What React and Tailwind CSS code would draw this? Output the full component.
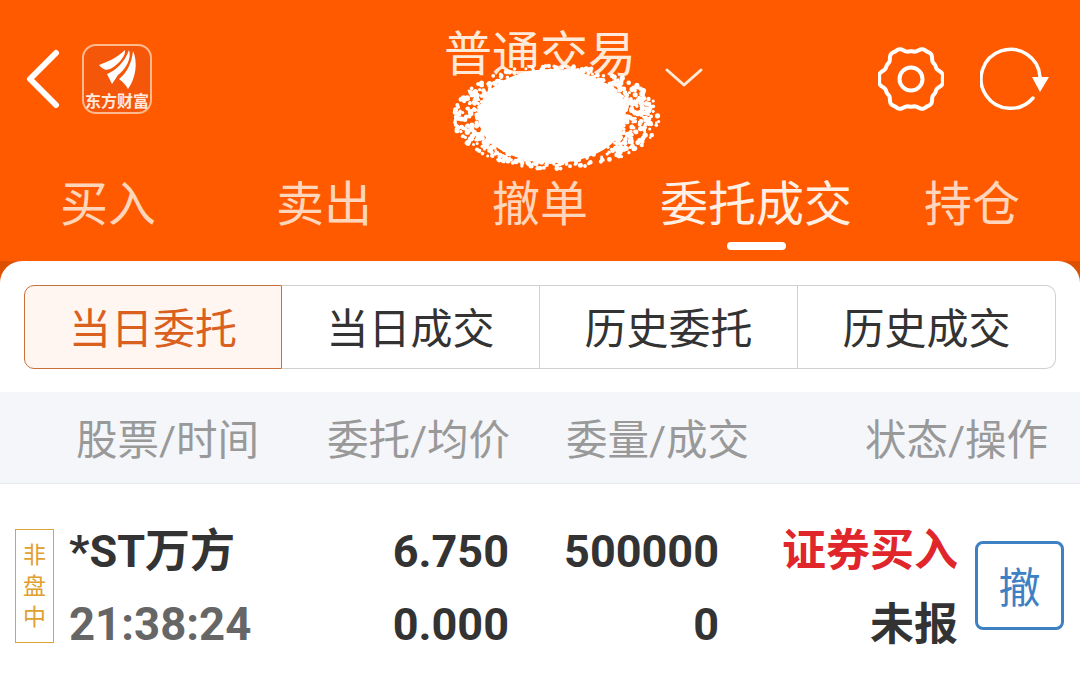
const tabs = ['买入', '卖出', '撤单', '委托成交', '持仓']
const segments = ['当日委托', '当日成交', '历史委托', '历史成交']

// gear outline, six squarish lobes
const gearPoints = Array.from({ length: 240 }, (_, i) => {
  const a = (i / 240) * Math.PI * 2
  const r = 29.8 + 2.6 * Math.cos(6 * a) - 0.6 * Math.cos(18 * a)
  return `${(33 + r * Math.cos(a)).toFixed(1)},${(33 + r * Math.sin(a)).toFixed(1)}`
}).join(' ')

// scribbled-out account name: seeded speckle around a solid blob
let seed = 17
const rand = () => {
  seed = (seed * 16807) % 2147483647
  return seed / 2147483647
}
const speckle = Array.from({ length: 900 }, () => {
  const a = rand() * Math.PI * 2
  const d = 0.62 + rand() * 0.38
  const stretch = Math.cos(a) > 0 ? 106 : 100
  return {
    x: 103 + stretch * d * Math.cos(a),
    y: 55 + 52 * d * Math.sin(a),
    r: 1.3 + rand() * 1.4,
  }
})

function Scribble() {
  return (
    <svg width="216" height="112" viewBox="0 0 216 112" className="absolute left-[450px] top-[62px]">
      <ellipse cx="102" cy="54" rx="74" ry="47" fill="#fff" />
      {speckle.map((d, i) => (
        <circle key={i} cx={d.x.toFixed(1)} cy={d.y.toFixed(1)} r={d.r.toFixed(1)} fill="#fff" />
      ))}
    </svg>
  )
}

function Logo() {
  return (
    <div className="relative flex h-[70px] w-[70px] flex-col items-center rounded-[14px] border-2 border-[#ffb98f] bg-[#f4570a]">
      <svg width="44" height="44" viewBox="0 0 44 44" className="mt-[1px]">
        <path d="M4 18 C12 15 22 11 30 3 C31 8 25 16 17 21 C12 24 8 23 4 18 Z" fill="#fff" />
        <path d="M12 27 C20 24 30 15 34 3 C37 11 31 22 23 28 L17 37 Z" fill="#fff" />
        <path d="M24 32 C32 26 37 15 38 4 C43 15 41 31 33 42 C31 38 28 35 24 32 Z" fill="#fff" />
      </svg>
      <span
        className="absolute bottom-[2px] text-[16px] leading-[20px] font-bold whitespace-nowrap text-[#ffe9dc]"
        style={{ fontFamily: '"Noto Sans CJK SC", sans-serif' }}
      >
        东方财富
      </span>
    </div>
  )
}

export default function App() {
  return (
    <div
      className="h-[680px] w-[1080px] overflow-hidden bg-white"
      style={{ fontFamily: 'Roboto, "Noto Sans CJK SC", sans-serif' }}
    >
      <div className="relative h-[261px] bg-[#ff5a00]">
        <div className="flex h-[174px] items-start">
          <svg width="36" height="60" viewBox="0 0 36 60" className="mt-[49px] ml-[25px]">
            <path d="M31 4 L5 30 L31 56" fill="none" stroke="#fff" strokeWidth="6" strokeLinecap="round" strokeLinejoin="round" />
          </svg>
          <div className="mt-[44px] ml-[21px]">
            <Logo />
          </div>
          <div className="mt-[24px] ml-[292px] text-[48px] leading-[62px] whitespace-nowrap text-[#ffe9d9]">普通交易</div>
          <svg width="38" height="20" viewBox="0 0 38 20" className="mt-[68px] ml-[29px]">
            <path d="M2 2 L19 17 L36 2" fill="none" stroke="#ffe9d9" strokeWidth="3" strokeLinecap="round" strokeLinejoin="round" />
          </svg>
          <svg width="66" height="66" viewBox="0 0 66 66" className="mt-[46px] ml-[175px]">
            <polygon points={gearPoints} fill="none" stroke="#fff" strokeWidth="4" strokeLinejoin="round" />
            <circle cx="33" cy="33" r="11.5" fill="none" stroke="#fff" strokeWidth="4" />
          </svg>
          <svg width="72" height="64" viewBox="0 0 72 64" className="mt-[47px] ml-[36px]">
            <path d="M60 30 A29.5 29.5 0 1 0 53 51" fill="none" stroke="#fff" strokeWidth="3.5" strokeLinecap="round" />
            <path d="M52 30 L69 30 L60 45 Z" fill="#fff" />
          </svg>
        </div>
        <div className="flex">
          {tabs.map((t) => (
            <div key={t} className="relative w-[216px] text-center text-[48px] leading-[62px] whitespace-nowrap text-[#ffd5bb]">
              <span className={t === '委托成交' ? 'text-[#fff0e6]' : ''}>{t}</span>
              {t === '委托成交' && (
                <div className="absolute top-[68px] left-[79px] h-[8px] w-[59px] rounded-full bg-white" />
              )}
            </div>
          ))}
        </div>
        <Scribble />
      </div>

      <div className="bg-[#dd5000]">
        <div className="h-[419px] rounded-t-[22px] bg-white pt-[24px]">
          <div className="mx-[24px] flex h-[84px]">
            {segments.map((s, i) =>
              i === 0 ? (
                <div key={s} className="flex w-[258px] items-center justify-center rounded-l-[10px] border border-[#c8703a] bg-[#fff6f2] pt-[4px] text-[42px] text-[#d9601e]">
                  {s}
                </div>
              ) : (
                <div
                  key={s}
                  className={`flex w-[258px] items-center justify-center border-y border-r border-[#d0d0d0] pt-[4px] text-[42px] text-[#333] ${i === 3 ? 'rounded-r-[10px]' : ''}`}
                >
                  {s}
                </div>
              )
            )}
          </div>

          <div className="mt-[23px] flex h-[92px] items-center border-b border-[#e6e8ec] bg-[#f4f6f9] pt-[8px] text-[41.5px] whitespace-nowrap text-[#999]">
            <div className="w-[266px] pl-[76px]">股票/时间</div>
            <div className="w-[244px] text-right">委托/均价</div>
            <div className="w-[239px] text-right">委量/成交</div>
            <div className="w-[299px] text-right">状态/操作</div>
          </div>

          <div className="flex pt-[45px] pl-[15px]">
            <div className="flex h-[114px] w-[39px] flex-col items-center justify-center gap-[5px] border border-[#dfa33c] pt-[2px] text-[23px] leading-[26px] text-[#e0a030]">
              <span>非</span>
              <span>盘</span>
              <span>中</span>
            </div>
            <div className="mt-[-15px] grid grid-cols-[250px_190px_210px_239px] grid-rows-[74px_74px] pl-[15px] text-[45px] leading-[74px] font-bold whitespace-nowrap text-[#333]">
              <div className="pt-[1px]">*ST万方</div>
              <div className="pt-[1px] text-right">6.750</div>
              <div className="pt-[1px] text-right">500000</div>
              <div className="text-right text-[44px] text-[#e0262b]">证券买入</div>
              <div className="text-[45.5px] text-[#666]">21:38:24</div>
              <div className="text-right">0.000</div>
              <div className="text-right">0</div>
              <div className="text-right text-[44px]">未报</div>
            </div>
            <div className="mt-[12px] ml-[17px] flex h-[89px] w-[89px] items-center justify-center rounded-[8px] border-[3px] border-[#3d80c4] pt-[6px] text-[42px] text-[#3d80c4]">
              撤
            </div>
          </div>
        </div>
      </div>
    </div>
  )
}
